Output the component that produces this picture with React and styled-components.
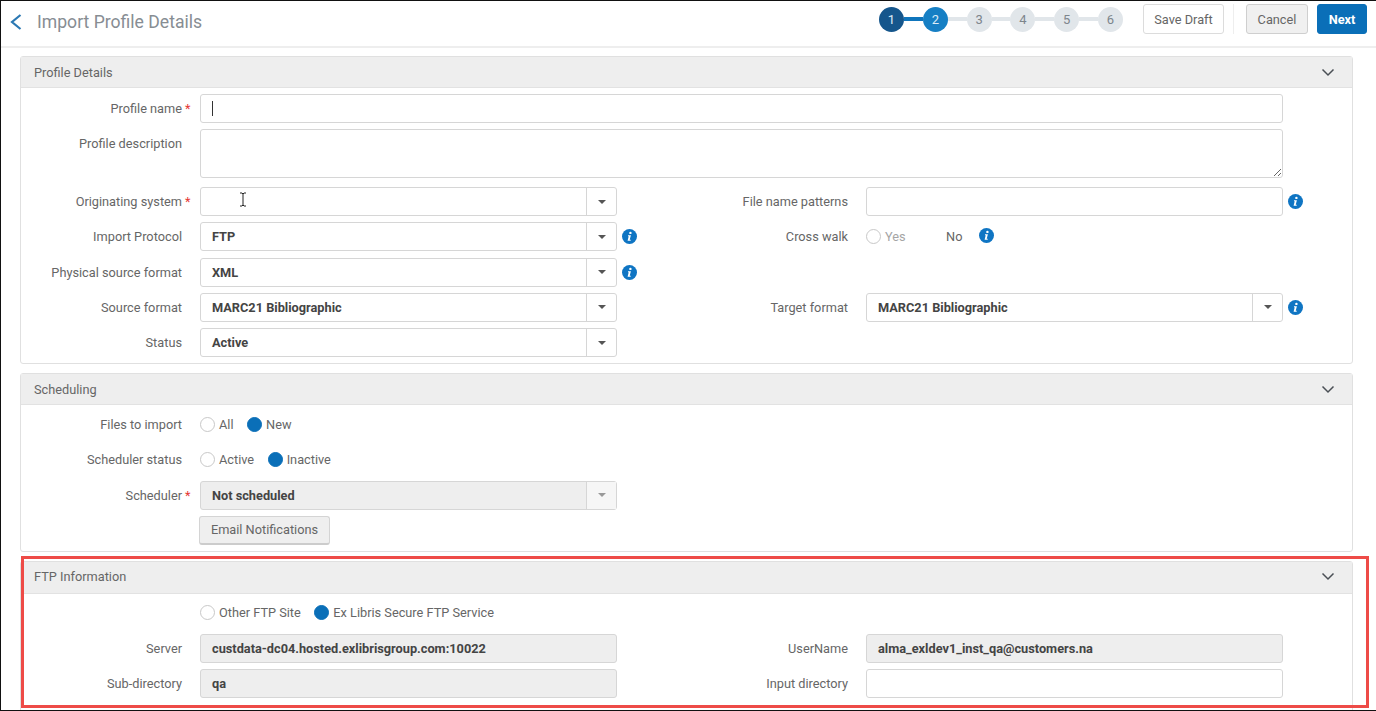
import React from "react";
import styled, { createGlobalStyle } from "styled-components";

const GlobalStyle = createGlobalStyle`
  html, body {
    margin: 0;
    padding: 0;
    background: #fff;
  }
  * {
    box-sizing: border-box;
  }
`;

const App = () => {
  return (
    <Page>
      <GlobalStyle />
      <Header>
        <BackButton>
          <svg width="12" height="16" viewBox="0 0 12 16">
            <polyline points="10.5,1 2,8 10.5,15" fill="none" stroke="#2b78b3" strokeWidth="2.2" />
          </svg>
        </BackButton>
        <Title>Import Profile Details</Title>
        <Stepper>
          {[1, 2, 3, 4, 5, 6].map((n) => (
            <React.Fragment key={n}>
              {n > 1 && <StepLine $on={n === 2} />}
              <Step $state={n === 1 ? "done" : n === 2 ? "current" : "todo"}>{n}</Step>
            </React.Fragment>
          ))}
        </Stepper>
        <SaveButton>Save Draft</SaveButton>
        <HeaderDivider />
        <CancelButton>Cancel</CancelButton>
        <NextButton>Next</NextButton>
      </Header>

      <Content>
        <Panel>
          <PanelHeader>
            <span>Profile Details</span>
            <Chevron />
          </PanelHeader>
          <PanelBody $top={6} $bottom={6}>
            <Row>
              <Label required>Profile name</Label>
              <WideInput>
                <TextCursor />
              </WideInput>
            </Row>
            <Row $after={2.5}>
              <TopLabel>Profile description</TopLabel>
              <TextArea />
            </Row>
            <Row>
              <Label required>Originating system</Label>
              <Select value="" pointer />
              <Spacer />
              <Label>File name patterns</Label>
              <Input />
              <InfoCell>
                <InfoIcon />
              </InfoCell>
            </Row>
            <Row>
              <Label>Import Protocol</Label>
              <Select value="FTP" />
              <InfoCell>
                <InfoIcon />
              </InfoCell>
              <Label>Cross walk</Label>
              <RadioGroup>
                <Radio disabled>Yes</Radio>
                <NoText>No</NoText>
                <InlineInfo>
                  <InfoIcon />
                </InlineInfo>
              </RadioGroup>
            </Row>
            <Row>
              <Label>Physical source format</Label>
              <Select value="XML" />
              <InfoCell>
                <InfoIcon />
              </InfoCell>
            </Row>
            <Row>
              <Label>Source format</Label>
              <Select value="MARC21 Bibliographic" />
              <Spacer />
              <Label>Target format</Label>
              <Select value="MARC21 Bibliographic" />
              <InfoCell>
                <InfoIcon />
              </InfoCell>
            </Row>
            <Row>
              <Label>Status</Label>
              <Select value="Active" />
            </Row>
          </PanelBody>
        </Panel>

        <Panel>
          <PanelHeader>
            <span>Scheduling</span>
            <Chevron />
          </PanelHeader>
          <PanelBody $top={5} $bottom={6.5}>
            <Row>
              <Label>Files to import</Label>
              <RadioGroup>
                <Radio>All</Radio>
                <Radio checked>New</Radio>
              </RadioGroup>
            </Row>
            <Row>
              <Label>Scheduler status</Label>
              <RadioGroup>
                <Radio>Active</Radio>
                <Radio checked>Inactive</Radio>
              </RadioGroup>
            </Row>
            <Row>
              <Label required>Scheduler</Label>
              <Select value="Not scheduled" disabled />
            </Row>
            <Row>
              <Label />
              <div>
                <EmailButton>Email Notifications</EmailButton>
              </div>
            </Row>
          </PanelBody>
        </Panel>

        <LastPanel>
          <PanelHeader $tall>
            <span>FTP Information</span>
            <Chevron />
          </PanelHeader>
          <PanelBody $top={4} $bottom={0}>
            <Row>
              <Label />
              <RadioGroup>
                <Radio>Other FTP Site</Radio>
                <Radio checked>Ex Libris Secure FTP Service</Radio>
              </RadioGroup>
            </Row>
            <Row>
              <Label>Server</Label>
              <Input $readOnly>custdata-dc04.hosted.exlibrisgroup.com:10022</Input>
              <Spacer />
              <Label>UserName</Label>
              <Input $readOnly>alma_exldev1_inst_qa@customers.na</Input>
            </Row>
            <Row>
              <Label>Sub-directory</Label>
              <Input $readOnly>qa</Input>
              <Spacer />
              <Label>Input directory</Label>
              <Input />
            </Row>
          </PanelBody>
        </LastPanel>
        <Highlight />
      </Content>
    </Page>
  );
};

const Chevron = () => (
  <svg width="14" height="9" viewBox="0 0 14 9">
    <polyline points="1.5,1.5 7,7 12.5,1.5" fill="none" stroke="#4a4f55" strokeWidth="1.5" />
  </svg>
);

const InfoIcon = () => (
  <svg width="15" height="15" viewBox="0 0 15 15">
    <circle cx="7.5" cy="7.5" r="7.5" fill="#0f75c3" />
    <circle cx="8.4" cy="3.9" r="1.2" fill="#fff" />
    <path d="M6 6.3h2.9l-1.2 4.5h1v1H5.6l1.1-4.5H6z" fill="#fff" />
  </svg>
);

const Label = ({ children, required, className }) => (
  <LabelCell className={className}>
    {children}
    <Star>{required ? "*" : ""}</Star>
  </LabelCell>
);

const Select = ({ value, disabled, pointer }) => (
  <SelectBox $disabled={disabled}>
    <SelectValue>{value}</SelectValue>
    <SelectButton $disabled={disabled}>
      <Caret $disabled={disabled} />
    </SelectButton>
    {pointer && (
      <MousePointer width="8" height="15" viewBox="0 0 8 15">
        <path d="M1 1h2l1 1 1-1h2M4 2v11M1 14h2l1-1 1 1h2" fill="none" stroke="#222" strokeWidth="1" />
      </MousePointer>
    )}
  </SelectBox>
);

const Radio = ({ children, checked, disabled }) => (
  <RadioItem $disabled={disabled}>
    <RadioDot $checked={checked} />
    {children}
  </RadioItem>
);

const Page = styled.div`
  position: relative;
  width: 1376px;
  height: 711px;
  overflow: hidden;
  border: 1px solid #111;
  border-right: none;
  font-family: Roboto, "Liberation Sans", sans-serif;
  font-size: 12.75px;
  color: #666;
  background: #fff;
`;

const Header = styled.header`
  display: flex;
  align-items: center;
  height: 47px;
  padding: 0 9px 9px 9px;
  border-bottom: 2px solid #eeeeee;
`;

const BackButton = styled.div`
  display: flex;
  align-items: center;
  width: 27px;
  padding-top: 5px;
`;

const Title = styled.h1`
  flex: 1;
  margin: 5px 0 0;
  font-size: 17.6px;
  font-weight: 400;
  color: #878d93;
`;

const Stepper = styled.div`
  display: flex;
  align-items: center;
  margin-right: 20px;
`;

const Step = styled.div`
  display: flex;
  align-items: center;
  justify-content: center;
  width: 25px;
  height: 25px;
  border-radius: 50%;
  font-size: 13px;
  color: ${(p) => (p.$state === "todo" ? "#7d858c" : "#dcecf7")};
  background: ${(p) =>
    p.$state === "done" ? "#15568c" : p.$state === "current" ? "#167fc4" : "#e1e6ea"};
`;

const StepLine = styled.div`
  width: 18.8px;
  height: 4px;
  background: ${(p) => (p.$on ? "#0f75bc" : "#e1e6ea")};
`;

const HeaderButton = styled.button`
  height: 30px;
  border-radius: 3px;
  font-family: inherit;
  font-size: 12.75px;
  padding: 0;
`;

const SaveButton = styled(HeaderButton)`
  width: 81px;
  background: #fff;
  border: 1px solid #dcdcdc;
  color: #666;
`;

const HeaderDivider = styled.div`
  width: 1px;
  height: 30px;
  margin: 0 12px 0 9px;
  background: #eeeeee;
`;

const CancelButton = styled(HeaderButton)`
  width: 62px;
  margin-right: 9px;
  background: #f0f0f0;
  border: 1px solid #cfcfcf;
  color: #666;
`;

const NextButton = styled(HeaderButton)`
  width: 50px;
  background: #0a6fb8;
  border: 1px solid #0a6fb8;
  color: #fff;
  font-weight: 700;
`;

const Content = styled.main`
  position: relative;
  display: flex;
  flex-direction: column;
  gap: 9px;
  padding: 8px 23px 0 19px;
`;

const Panel = styled.section`
  border: 1px solid #e0e0e0;
  border-radius: 3px;
`;

const LastPanel = styled(Panel)`
  height: 160px;
`;

const PanelHeader = styled.div`
  display: flex;
  align-items: center;
  justify-content: space-between;
  height: ${(p) => (p.$tall ? "32px" : "31px")};
  padding: ${(p) => (p.$tall ? "0 17px 2px 13px" : "0 17px 0 13px")};
  background: #eeeeee;
  border-bottom: 1px solid #e2e2e2;
  color: #666;
`;

const PanelBody = styled.div`
  display: flex;
  flex-direction: column;
  gap: 6.25px;
  padding: ${(p) => p.$top}px 0 ${(p) => p.$bottom}px;
`;

const Row = styled.div`
  display: grid;
  grid-template-columns: 179px 417px 32px 217px 417px 32px;
  align-items: center;
  min-height: 29px;
  margin-bottom: ${(p) => p.$after || 0}px;
`;

const LabelCell = styled.label`
  display: flex;
  justify-content: flex-end;
  color: #666;
`;

const TopLabel = styled(Label)`
  align-self: start;
  padding-top: 7px;
`;

const Star = styled.span`
  width: 18px;
  padding-left: 3px;
  color: #e53935;
`;

const Input = styled.div`
  display: flex;
  align-items: center;
  height: 29px;
  padding: 0 11px;
  border: 1px solid #d6d6d6;
  border-radius: 3px;
  font-weight: 700;
  color: #444;
  background: ${(p) => (p.$readOnly ? "#eeeeee" : "#fff")};
`;

const WideInput = styled(Input)`
  grid-column: 2 / 6;
`;

const TextCursor = styled.span`
  width: 1px;
  height: 15px;
  background: #333;
`;

const TextArea = styled.textarea`
  grid-column: 2 / 6;
  display: block;
  height: 49px;
  border: 1px solid #d6d6d6;
  border-radius: 3px;
  outline: none;
  background: #fff;
`;

const SelectBox = styled.div`
  position: relative;
  display: flex;
  height: 29px;
  border: 1px solid #d6d6d6;
  border-radius: 3px;
  background: ${(p) => (p.$disabled ? "#eeeeee" : "#fff")};
`;

const SelectValue = styled.div`
  flex: 1;
  display: flex;
  align-items: center;
  padding: 0 11px;
  font-weight: 700;
  color: #444;
`;

const SelectButton = styled.div`
  display: flex;
  align-items: center;
  justify-content: center;
  width: 30px;
  border-left: 1px solid #d6d6d6;
  background: ${(p) => (p.$disabled ? "#f6f6f6" : "transparent")};
`;

const Caret = styled.span`
  width: 0;
  height: 0;
  border-left: 4px solid transparent;
  border-right: 4px solid transparent;
  border-top: 4px solid ${(p) => (p.$disabled ? "#999" : "#555")};
`;

const MousePointer = styled.svg`
  position: absolute;
  left: 38px;
  top: 4px;
`;

const Spacer = styled.div``;

const InfoCell = styled.div`
  display: flex;
  align-items: center;
  padding-left: 5px;
`;

const InlineInfo = styled.div`
  display: flex;
  margin: -3px 0 0 3px;
`;

const RadioGroup = styled.div`
  display: flex;
  align-items: center;
  gap: 13.5px;
`;

const RadioItem = styled.span`
  display: flex;
  align-items: center;
  gap: 4px;
  color: ${(p) => (p.$disabled ? "#a5a5a5" : "#666")};
`;

const RadioDot = styled.span`
  width: 15px;
  height: 15px;
  border-radius: 50%;
  background: ${(p) => (p.$checked ? "#0a6fb8" : "#fff")};
  border: 1px solid ${(p) => (p.$checked ? "#0a6fb8" : "#c8c8c8")};
`;

const NoText = styled.span`
  margin-left: 27px;
  color: #666;
`;

const EmailButton = styled.button`
  height: 29px;
  width: 131px;
  padding: 0;
  margin-left: -1px;
  font-family: inherit;
  font-size: 12.75px;
  color: #666;
  background: #efefef;
  border: 1px solid #d4d4d4;
  border-bottom: 2px solid #cccccc;
  border-radius: 3px;
`;

const Highlight = styled.div`
  position: absolute;
  left: 20px;
  top: 508px;
  width: 1348px;
  height: 152px;
  border: 3px solid #ee4b47;
  pointer-events: none;
`;

export default App;
